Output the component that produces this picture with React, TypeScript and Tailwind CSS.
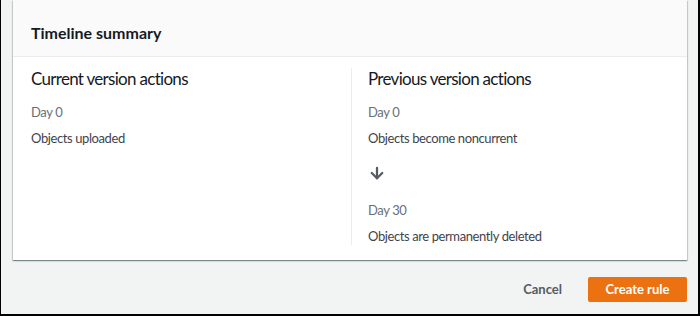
import { ArrowDown } from "lucide-react";

const font = { fontFamily: 'Lato, "Open Sans", Arial, sans-serif' };

export default function App() {
  return (
    <div
      className="w-[700px] h-[316px] bg-[#f2f3f3] border-l border-r-2 border-b-2 border-black overflow-hidden"
      style={font}
    >
      <div className="ml-3 mr-[11px] bg-white shadow-[0_1px_1px_0_rgba(0,28,36,0.3),1px_1px_1px_0_rgba(0,28,36,0.15),-1px_1px_1px_0_rgba(0,28,36,0.15)]">
        <div className="h-[57px] px-[18px] flex items-center bg-[#fafafa] border-b border-[#eaeded]">
          <h2 className="text-[16px] font-bold text-[#16191f] pt-[10px]">Timeline summary</h2>
        </div>
        <div className="grid grid-cols-2 px-[18px] pt-[11px] pb-[15px]">
          <div className="pr-5">
            <h3 className="text-[17px] tracking-[-0.7px] text-[#16191f] leading-[22px]">Current version actions</h3>
            <div className="mt-[13px] text-[13px] tracking-[-0.4px] leading-[18px] text-[#687078]">Day 0</div>
            <div className="mt-[8px] text-[13px] tracking-[-0.4px] leading-[18px] text-[#3f444b]">Objects uploaded</div>
          </div>
          <div className="border-l border-[#eaeded] pl-4 ml-px">
            <h3 className="text-[17px] tracking-[-0.7px] text-[#16191f] leading-[22px]">Previous version actions</h3>
            <div className="mt-[13px] text-[13px] tracking-[-0.4px] leading-[18px] text-[#687078]">Day 0</div>
            <div className="mt-[8px] text-[13px] tracking-[-0.4px] leading-[18px] text-[#3f444b]">Objects become noncurrent</div>
            <ArrowDown className="mt-[17px] w-[18px] h-[18px] text-[#545b64]" strokeWidth={3} />
            <div className="mt-[19px] text-[13px] tracking-[-0.4px] leading-[18px] text-[#687078]">Day 30</div>
            <div className="mt-[8px] text-[13px] tracking-[-0.4px] leading-[18px] text-[#3f444b]">Objects are permanently deleted</div>
          </div>
        </div>
      </div>
      <div className="flex justify-end items-center gap-[26px] mt-[17px] mr-[11px]">
        <button className="text-[13px] font-bold text-[#545b64]">Cancel</button>
        <button className="h-[25px] w-[99px] bg-[#ec7211] text-white text-[13px] font-bold rounded-[2px]">
          Create rule
        </button>
      </div>
    </div>
  );
}
